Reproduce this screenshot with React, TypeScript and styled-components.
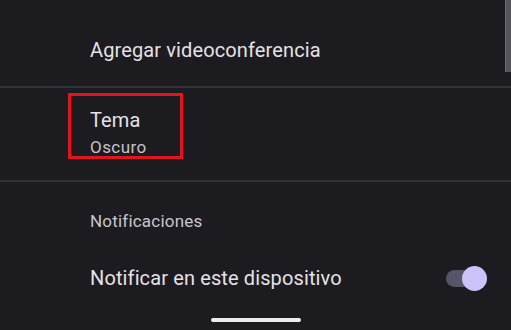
import React from "react";
import styled, { createGlobalStyle } from "styled-components";

const Global = createGlobalStyle`
  html, body { margin: 0; padding: 0; background: #1c1b1f; }
  body { font-family: Roboto, "Noto Sans", sans-serif; -webkit-font-smoothing: antialiased; }
`;

const Screen = styled.div`
  position: relative;
  width: 511px;
  height: 330px;
  overflow: hidden;
  background: #1c1b1f;
  display: flex;
  flex-direction: column;
`;

const ScrollThumb = styled.div`
  position: absolute;
  top: 0;
  right: 0;
  width: 5px;
  height: 72px;
  background: #56555b;
  border-left: 1px solid #6a696f;
`;

const SimpleRow = styled.div`
  padding: 38px 0 24px 90px;
`;

const Title = styled.div`
  font-size: 20px;
  line-height: 24px;
  letter-spacing: 0.12px;
  color: #e6e1e6;
  white-space: nowrap;
`;

const Subtitle = styled.div`
  font-size: 17px;
  line-height: 20px;
  letter-spacing: 0.45px;
  color: #c6c2ca;
  margin-top: 5px;
  white-space: nowrap;
`;

const Divider = styled.div`
  height: 2px;
  background: #323136;
`;

const ThemeRow = styled.div`
  padding: 5px 0 21px 68px;
`;

const Highlight = styled.div`
  box-sizing: border-box;
  width: 115px;
  height: 66px;
  border: 3px solid #e3141b;
  padding: 12px 0 0 19px;
`;

const SectionHeader = styled.div`
  margin: 29px 0 0 90px;
  font-size: 17px;
  line-height: 20px;
  letter-spacing: 0.2px;
  color: #c9c5cd;
`;

const ToggleRow = styled.div`
  margin-top: 25px;
  height: 44px;
  display: flex;
  align-items: center;
  justify-content: space-between;
  padding: 0 24px 0 90px;
`;

const Switch = styled.div<{ $on: boolean }>`
  position: relative;
  width: 41px;
  height: 24px;
  display: flex;
  align-items: center;
  justify-content: ${(p) => (p.$on ? "flex-start" : "flex-end")};
`;

const Track = styled.div`
  width: 36px;
  height: 17px;
  border-radius: 9px;
  background: #57556a;
`;

const Thumb = styled.div`
  position: absolute;
  right: 0;
  top: 0;
  width: 25px;
  height: 25px;
  border-radius: 50%;
  background: #cbc2f8;
`;

const HomeBar = styled.div`
  margin: 18px auto 0;
  width: 90px;
  height: 4px;
  border-radius: 2px;
  background: #ececec;
`;

export default function App() {
  return (
    <>
      <Global />
      <Screen>
        <SimpleRow>
          <Title>Agregar videoconferencia</Title>
        </SimpleRow>
        <Divider />
        <ThemeRow>
          <Highlight>
            <Title>Tema</Title>
            <Subtitle>Oscuro</Subtitle>
          </Highlight>
        </ThemeRow>
        <Divider />
        <SectionHeader>Notificaciones</SectionHeader>
        <ToggleRow>
          <Title>Notificar en este dispositivo</Title>
          <Switch $on>
            <Track />
            <Thumb />
          </Switch>
        </ToggleRow>
        <HomeBar />
        <ScrollThumb />
      </Screen>
    </>
  );
}
